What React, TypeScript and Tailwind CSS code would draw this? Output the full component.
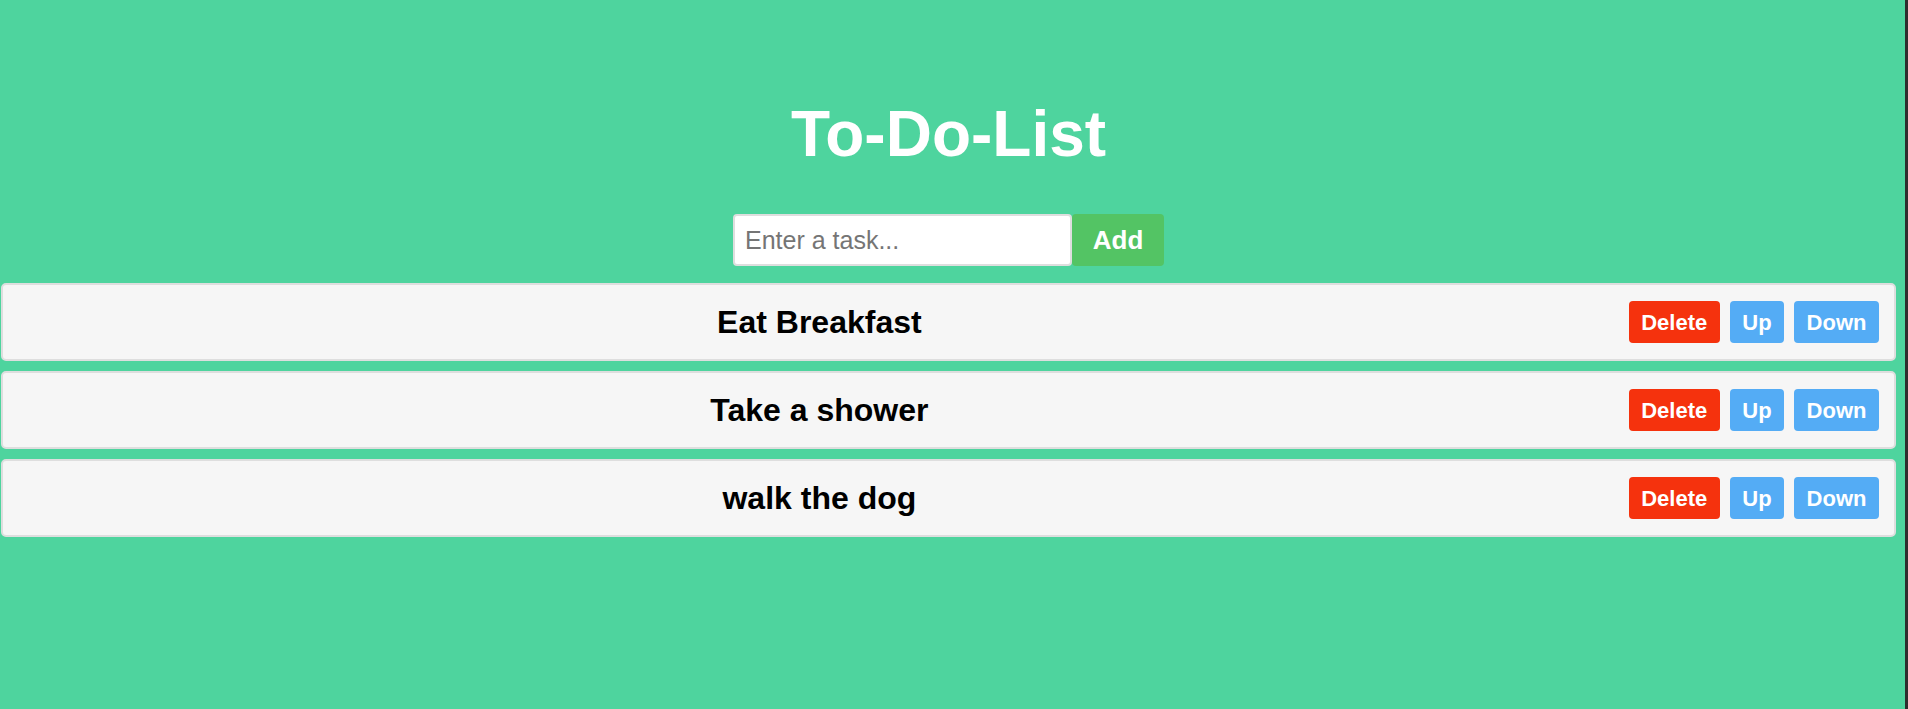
import React from "react";

const tasks = ["Eat Breakfast", "Take a shower", "walk the dog"];

export default function App() {
  return (
    <div
      className="flex h-[709px] w-full bg-[#4ed49e]"
      style={{ fontFamily: '"Liberation Sans", Arial, sans-serif' }}
    >
      <main className="flex flex-1 flex-col pl-[1px] pr-[9px] pt-[97px]">
        <h1 className="text-center text-[64px] font-bold leading-[74px] text-white">
          To-Do-List
        </h1>
        <div className="mt-[43px] flex justify-center">
          <input
            type="text"
            placeholder="Enter a task..."
            className="h-[52px] w-[339px] rounded-[4px] border-2 border-[#dedede] bg-white px-[10px] text-[25px] text-black outline-none placeholder:text-[#757575]"
          />
          <button className="h-[52px] w-[92px] rounded-[4px] bg-[#53c464] text-[26px] font-bold text-white">
            Add
          </button>
        </div>
        <ol className="mt-[17px] flex flex-col gap-[10px]">
          {tasks.map((t) => (
            <li
              key={t}
              className="flex h-[78px] items-center gap-[8px] rounded-[5px] border-2 border-[#dedede] bg-[#f6f6f6] px-[15px]"
            >
              <span className="flex-1 text-center text-[32px] font-bold text-black">
                {t}
              </span>
              <div className="flex gap-[10px]">
                <button className="h-[42px] rounded-[4px] bg-[#f5320d] px-[12.5px] text-[22px] font-bold text-white">
                  Delete
                </button>
                <button className="h-[42px] rounded-[4px] bg-[#54acf5] px-[12.5px] text-[22px] font-bold text-white">
                  Up
                </button>
                <button className="h-[42px] rounded-[4px] bg-[#54acf5] px-[12.5px] text-[22px] font-bold text-white">
                  Down
                </button>
              </div>
            </li>
          ))}
        </ol>
      </main>
      <div className="w-[3px] bg-[#2e2e2e]" />
    </div>
  );
}
